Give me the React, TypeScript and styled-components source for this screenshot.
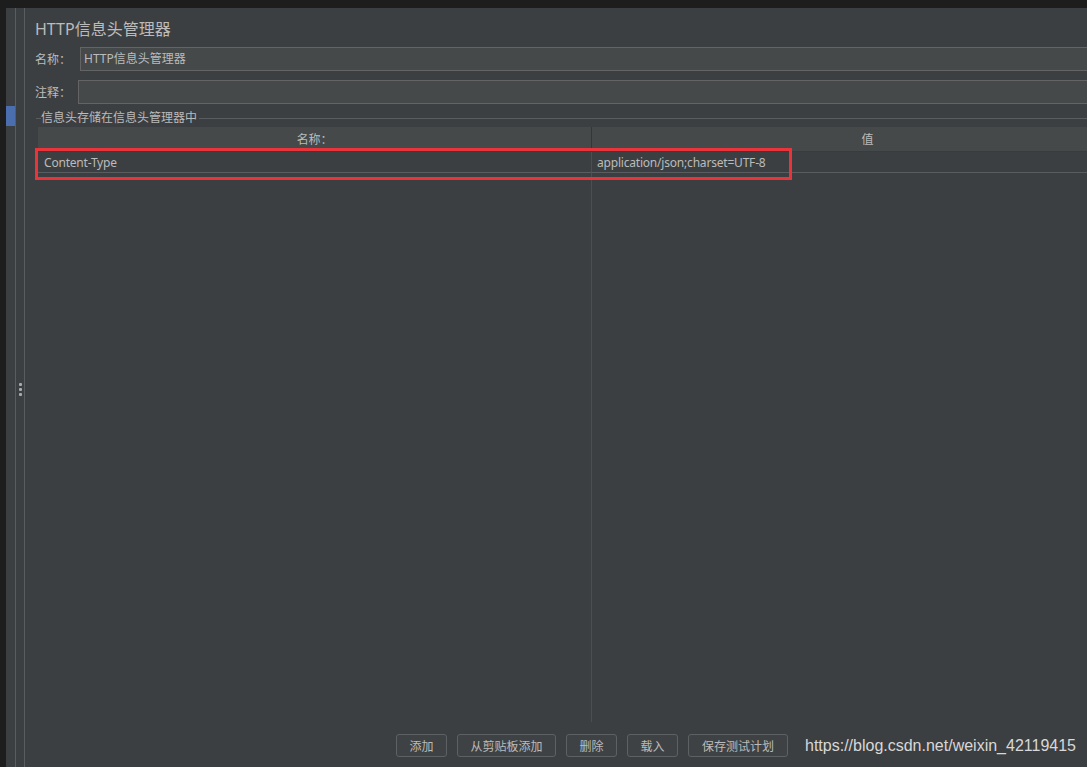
import React from "react";
import styled, { createGlobalStyle } from "styled-components";

const GlobalStyle = createGlobalStyle`
  html, body {
    margin: 0;
    padding: 0;
    background: #1d1d1d;
  }
  body {
    font-family: "Noto Sans", "Noto Sans CJK SC", sans-serif;
  }
`;

const colors = {
  dark: "#1d1d1d",
  panel: "#3c3f41",
  field: "#45494a",
  border: "#646464",
  line: "#5a5d5f",
  text: "#bbbbbb",
};

const Frame = styled.div`
  position: relative;
  display: flex;
  width: 1087px;
  height: 767px;
  padding: 8px 0 0 6px;
  box-sizing: border-box;
  overflow: hidden;
  background: ${colors.dark};
`;

const Gutter = styled.div`
  display: flex;
  flex: 0 0 auto;
  background: ${colors.panel};
`;

const GutterStrip = styled.div`
  width: 9px;
  padding-top: 98px;
  border-right: 1px solid ${colors.line};
`;

const Marker = styled.div`
  width: 9px;
  height: 20px;
  background: #4b6eaf;
`;

const Splitter = styled.div`
  width: 8px;
  display: flex;
  flex-direction: column;
  align-items: center;
  justify-content: center;
  gap: 2px;
  padding-top: 4px;
  border-right: 1px solid ${colors.line};
`;

const Dot = styled.span`
  width: 3px;
  height: 3px;
  border-radius: 1px;
  background: #a9abad;
`;

const Panel = styled.main`
  flex: 0 0 1134px;
  display: flex;
  flex-direction: column;
  padding: 11px 16px 10px 10px;
  box-sizing: border-box;
  background: ${colors.panel};
  color: ${colors.text};
  font-size: 12px;
`;

const Title = styled.h1`
  margin: 0;
  height: 20px;
  line-height: 20px;
  font-size: 16px;
  font-weight: normal;
  color: ${colors.text};
`;

const FieldRow = styled.div<{ $top: number; $labelWidth: number }>`
  display: grid;
  grid-template-columns: ${(p) => p.$labelWidth}px 1fr;
  align-items: center;
  margin-top: ${(p) => p.$top}px;
`;

const Label = styled.label`
  white-space: nowrap;
`;

const Input = styled.div`
  height: 24px;
  line-height: 22px;
  box-sizing: border-box;
  padding: 0 3px;
  background: ${colors.field};
  border: 1px solid ${colors.border};
  color: ${colors.text};
`;

const Group = styled.section`
  flex: 1 1 auto;
  display: flex;
  flex-direction: column;
  margin: 7px 0 0 1px;
  min-height: 0;
`;

const Legend = styled.div`
  display: flex;
  align-items: center;
  height: 14px;
  line-height: 14px;

  &::before {
    content: "";
    width: 5px;
    border-top: 1px solid ${colors.line};
  }
  &::after {
    content: "";
    flex: 1;
    border-top: 1px solid ${colors.line};
    margin-left: 2px;
  }
`;

const Table = styled.div`
  flex: 1 1 auto;
  display: grid;
  grid-template-columns: 554px 1fr;
  grid-template-rows: 25px 21px 1fr;
  margin: 2px 0 0 2px;
  letter-spacing: -0.2px;
`;

const HeadCell = styled.div<{ $last?: boolean }>`
  display: flex;
  align-items: center;
  justify-content: center;
  background: ${colors.field};
  border-bottom: 1px solid #393b3d;
  border-right: ${(p) => (p.$last ? "none" : `1px solid #34373a`)};
`;

const Cell = styled.div<{ $last?: boolean }>`
  display: flex;
  align-items: center;
  padding-left: ${(p) => (p.$last ? 5 : 6)}px;
  border-bottom: 1px solid ${colors.line};
  border-right: ${(p) => (p.$last ? "none" : `1px solid #4c4f52`)};
`;

const Filler = styled.div<{ $last?: boolean }>`
  border-right: ${(p) => (p.$last ? "none" : `1px solid #4c4f52`)};
`;

const Highlight = styled.div`
  position: absolute;
  left: 35px;
  top: 148px;
  width: 757px;
  height: 32px;
  box-sizing: border-box;
  border: 3px solid #e8343a;
  pointer-events: none;
`;

const ButtonBar = styled.div`
  display: flex;
  justify-content: center;
  gap: 10px;
  margin-top: 12px;
  padding-left: 6px;
`;

const Button = styled.button<{ $width: number }>`
  width: ${(p) => p.$width}px;
  height: 23px;
  padding: 0;
  background: #3f4244;
  border: 1px solid #5e6163;
  border-radius: 3px;
  color: ${colors.text};
  font-family: "Noto Sans CJK SC", sans-serif;
  font-size: 12px;
`;

const Watermark = styled.div`
  position: absolute;
  left: 805px;
  top: 737px;
  font-family: "Liberation Sans", Arial, sans-serif;
  font-size: 16px;
  color: #d8d8d8;
`;

const buttons: [string, number][] = [
  ["添加", 51],
  ["从剪贴板添加", 99],
  ["删除", 51],
  ["载入", 51],
  ["保存测试计划", 100],
];

export default function App() {
  return (
    <>
      <GlobalStyle />
      <Frame>
        <Gutter>
          <GutterStrip>
            <Marker />
          </GutterStrip>
          <Splitter>
            <Dot />
            <Dot />
            <Dot />
          </Splitter>
        </Gutter>
        <Panel>
          <Title>HTTP信息头管理器</Title>
          <FieldRow $top={8} $labelWidth={45}>
            <Label>名称：</Label>
            <Input>HTTP信息头管理器</Input>
          </FieldRow>
          <FieldRow $top={9} $labelWidth={43}>
            <Label>注释：</Label>
            <Input />
          </FieldRow>
          <Group>
            <Legend>信息头存储在信息头管理器中</Legend>
            <Table>
              <HeadCell>名称：</HeadCell>
              <HeadCell $last>值</HeadCell>
              <Cell>Content-Type</Cell>
              <Cell $last>application/json;charset=UTF-8</Cell>
              <Filler />
              <Filler $last />
            </Table>
          </Group>
          <ButtonBar>
            {buttons.map(([label, width]) => (
              <Button key={label} $width={width}>
                {label}
              </Button>
            ))}
          </ButtonBar>
        </Panel>
        <Highlight />
        <Watermark>https://blog.csdn.net/weixin_42119415</Watermark>
      </Frame>
    </>
  );
}
